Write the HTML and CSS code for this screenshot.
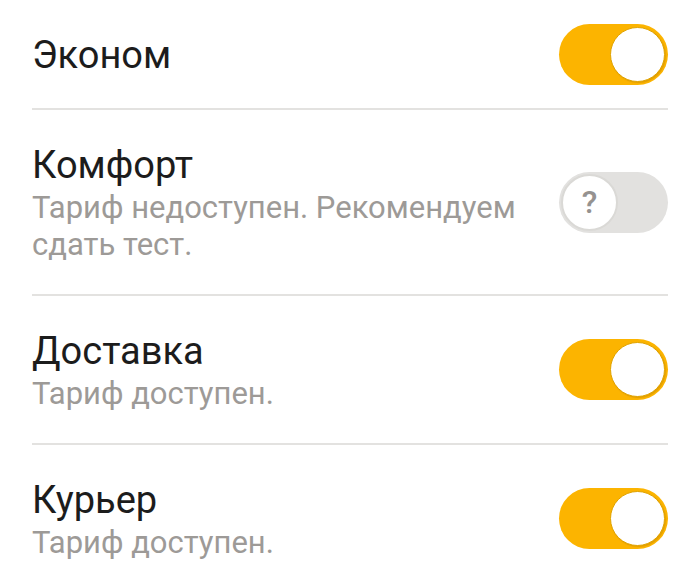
FILE: index.html
```html
<!DOCTYPE html>
<html lang="ru">
<head>
<meta charset="utf-8">
<link rel="stylesheet" href="styles.css">
</head>
<body>
<div class="list">
  <div class="row">
    <div class="text">
      <div class="title">Эконом</div>
    </div>
    <div class="switch on"><div class="knob"></div></div>
  </div>
  <div class="row">
    <div class="text">
      <div class="title">Комфорт</div>
      <div class="sub">Тариф недоступен. Рекомендуем<br>сдать тест.</div>
    </div>
    <div class="switch off"><div class="knob">?</div></div>
  </div>
  <div class="row">
    <div class="text">
      <div class="title">Доставка</div>
      <div class="sub">Тариф доступен.</div>
    </div>
    <div class="switch on"><div class="knob"></div></div>
  </div>
  <div class="row last">
    <div class="text">
      <div class="title">Курьер</div>
      <div class="sub">Тариф доступен.</div>
    </div>
    <div class="switch on"><div class="knob"></div></div>
  </div>
</div>
</body>
</html>
```
FILE: styles.css
```css
html, body {
  margin: 0;
  padding: 0;
  background: #ffffff;
}
body {
  font-family: Roboto, "Noto Sans", sans-serif;
  color: #1c1c1c;
}
.list {
  padding: 0 32px;
}
.row {
  display: flex;
  align-items: center;
  justify-content: space-between;
  border-bottom: 2px solid #e3e2e0;
}
.row.last {
  border-bottom: none;
}
.text {
  padding: 33px 0 31px;
}
.row:first-child .text {
  padding-bottom: 31px;
  min-height: 44px;
}
.title {
  font-size: 38px;
  line-height: 44px;
}
.sub {
  margin-top: 2px;
  font-size: 31px;
  line-height: 37px;
  color: #9d9a97;
}
.switch {
  width: 109px;
  height: 61px;
  border-radius: 31px;
  box-sizing: border-box;
  display: flex;
  align-items: center;
  padding: 3px;
  flex-shrink: 0;
}
.switch.on {
  background: #fcb400;
  justify-content: flex-end;
}
.switch.off {
  background: #e2e1df;
  justify-content: flex-start;
  padding: 2px;
}
.knob {
  width: 55px;
  height: 55px;
  border-radius: 50%;
  background: #ffffff;
  box-sizing: border-box;
}
.switch.on .knob {
  border: 1px solid #e0a300;
  box-shadow: 1px 1px 1px rgba(180, 120, 0, 0.35);
}
.switch.off .knob {
  width: 57px;
  height: 57px;
  border: 2px solid #dad9d6;
  display: flex;
  align-items: center;
  justify-content: center;
  font-size: 32px;
  font-weight: 500;
  color: #959290;
}
```
